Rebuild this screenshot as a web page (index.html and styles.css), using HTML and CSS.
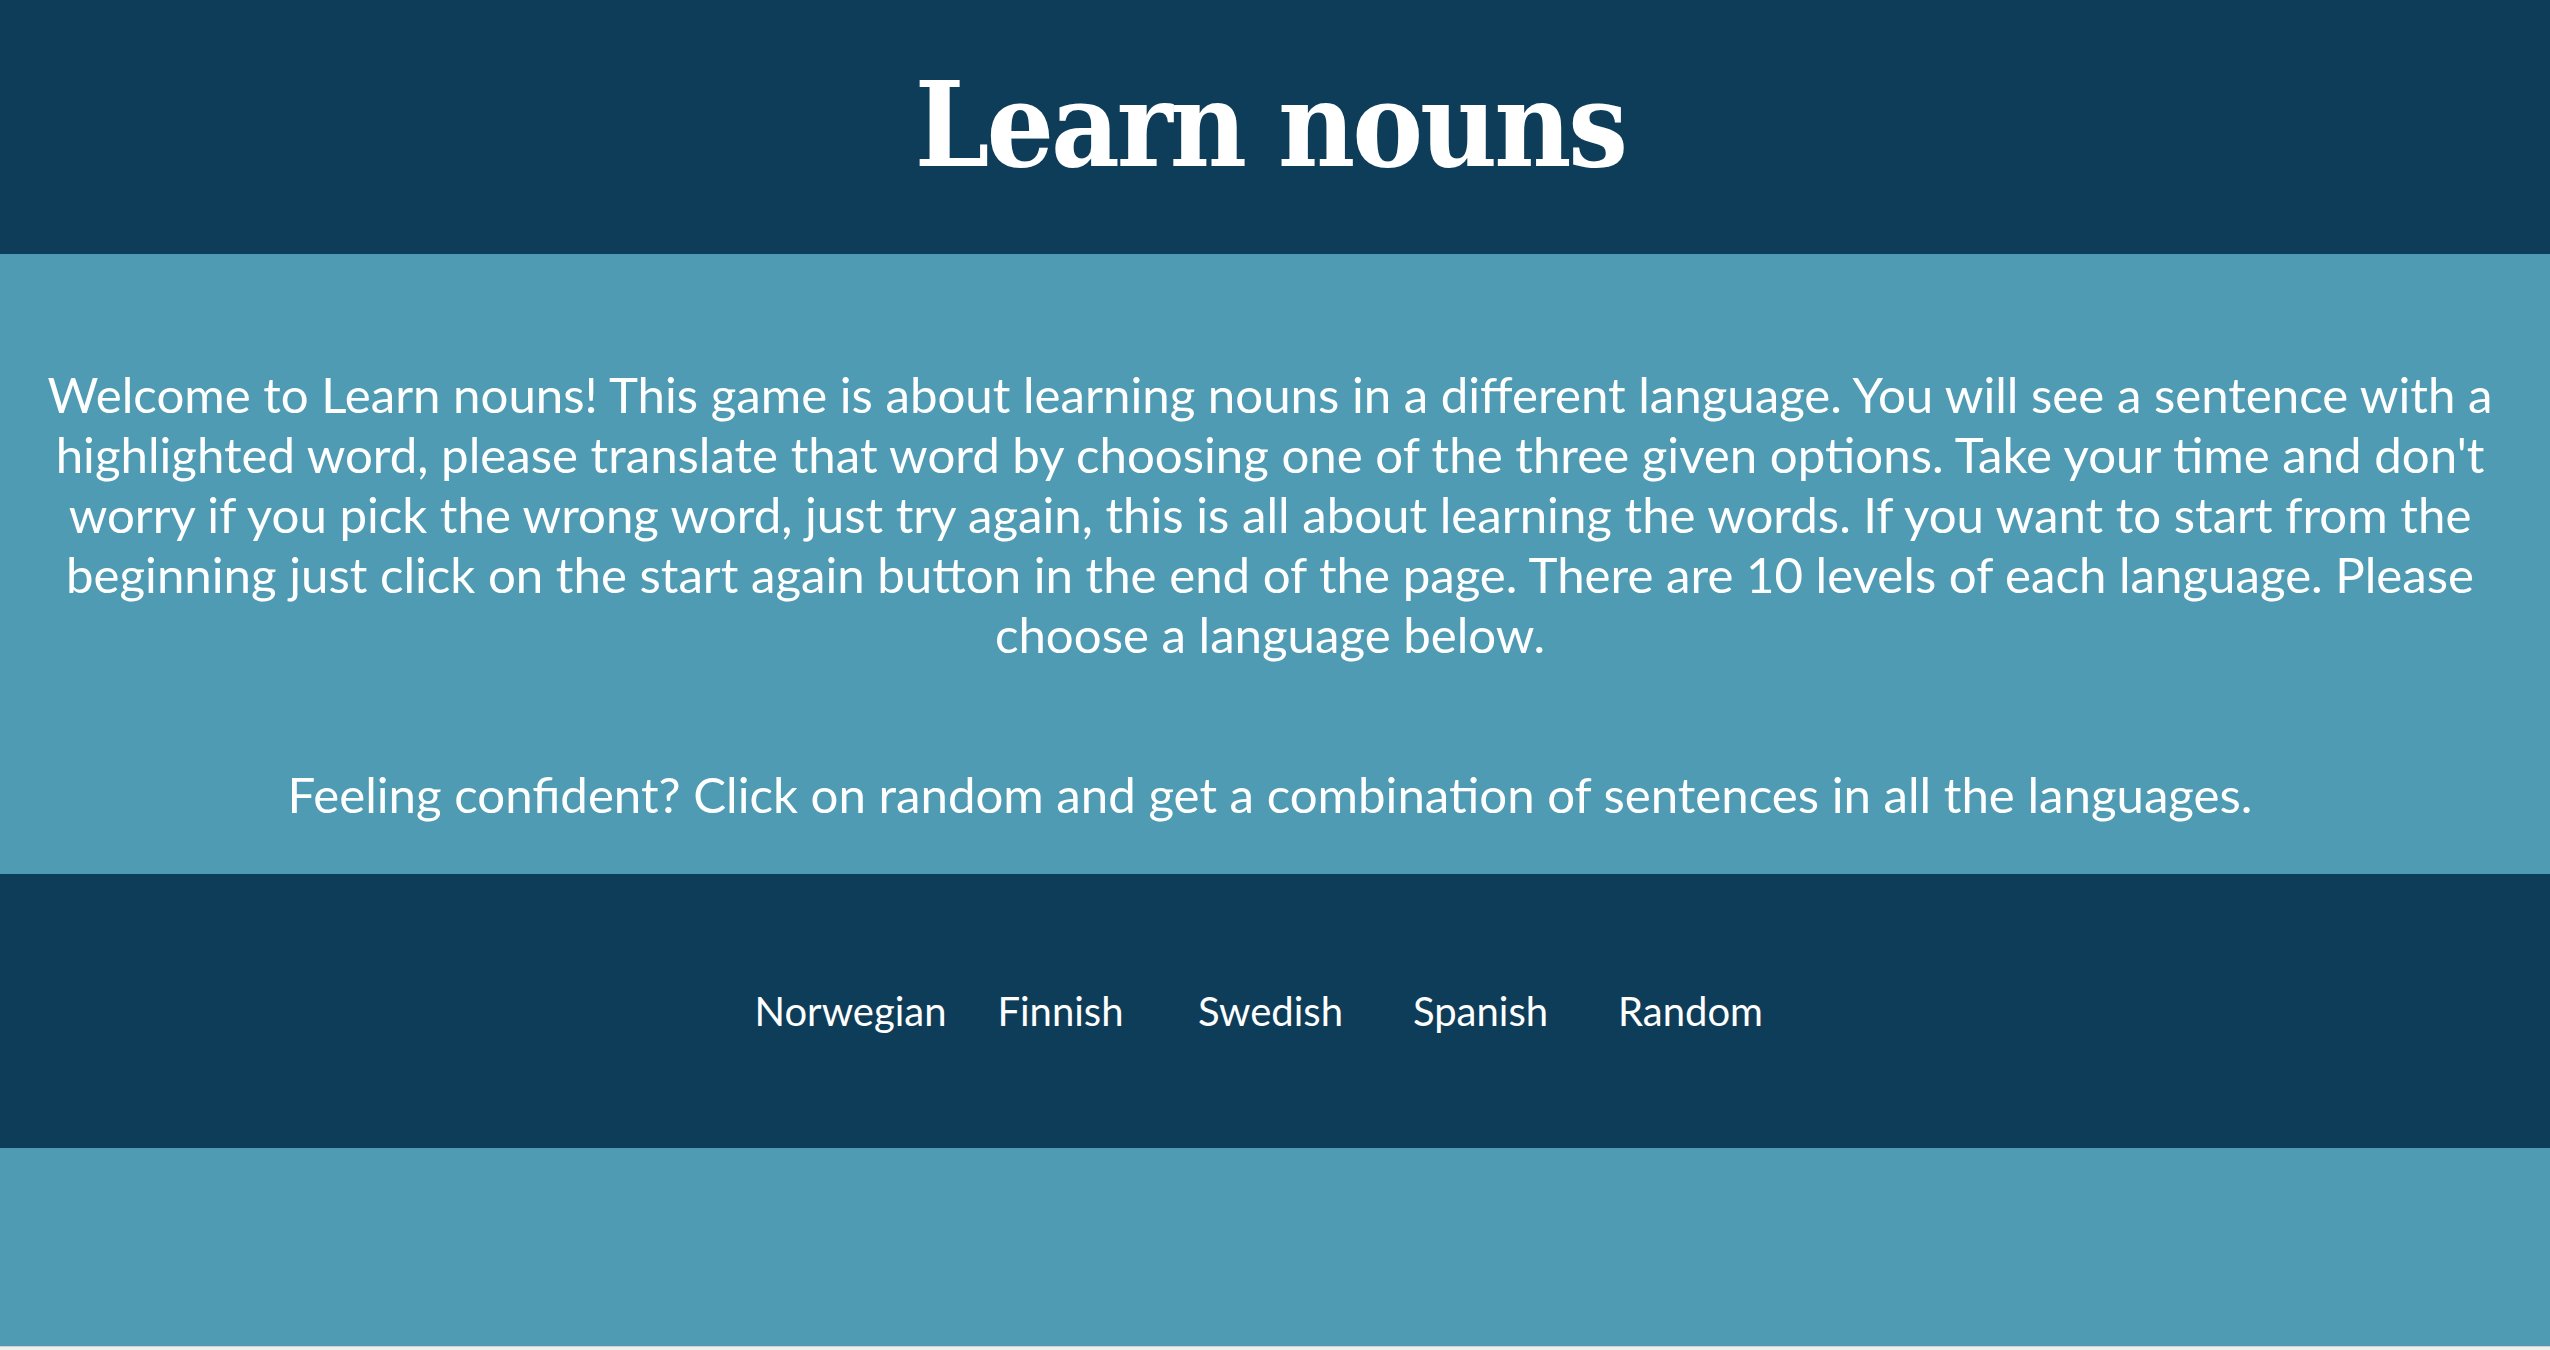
FILE: index.html
```html
<!DOCTYPE html>
<html lang="en">
<head>
<meta charset="utf-8">
<title>Learn nouns</title>
<link rel="stylesheet" href="styles.css">
</head>
<body>
<header class="site-header">
  <h1 class="title">Learn nouns</h1>
</header>
<section class="intro">
  <p class="intro-text">Welcome to Learn nouns! This game is about learning nouns in a different language. You will see a sentence with a highlighted word, please translate that word by choosing one of the three given options. Take your time and don't worry if you pick the wrong word, just try again, this is all about learning the words. If you want to start from the beginning just click on the start again button in the end of the page. There are 10 levels of each language. Please choose a language below.</p>
  <p class="intro-text intro-second">Feeling confident? Click on random and get a combination of sentences in all the languages.</p>
</section>
<nav class="languages">
  <a class="lang" href="#">Norwegian</a>
  <a class="lang" href="#">Finnish</a>
  <a class="lang" href="#">Swedish</a>
  <a class="lang" href="#">Spanish</a>
  <a class="lang" href="#">Random</a>
</nav>
<footer class="site-footer"></footer>
<div class="page-end"></div>
</body>
</html>
```

FILE: styles.css
```css
html {
  background: #efefef;
}
body {
  margin: 0;
  font-family: Lato, "Open Sans", sans-serif;
  color: #ffffff;
}
.site-header {
  background: #0e3d5a;
  height: 254px;
  box-sizing: border-box;
  padding: 66px 10px 0 0;
  text-align: center;
}
.title {
  margin: 0;
  font-family: "DejaVu Serif", "Liberation Serif", serif;
  font-weight: 700;
  font-stretch: condensed;
  font-size: 118px;
  line-height: 118px;
  letter-spacing: -3px;
  color: #ffffff;
}
.intro {
  background: #4e9bb3;
  padding: 110px 50px 50px 40px;
  text-align: center;
}
.intro-text {
  margin: 0;
  font-size: 49.2px;
  line-height: 60px;
}
.intro-second {
  margin-top: 100px;
}
.languages {
  background: #0e3d5a;
  display: flex;
  justify-content: center;
  padding: 113px 9px 113px 0;
}
.lang {
  width: 210px;
  text-align: center;
  color: #ffffff;
  text-decoration: none;
  font-size: 40px;
  line-height: 48px;
}
.site-footer {
  background: #4e9bb3;
  height: 198px;
}
.page-end {
  border-top: 1px solid #cfcfcf;
  height: 10px;
  background: #efefef;
}
```
